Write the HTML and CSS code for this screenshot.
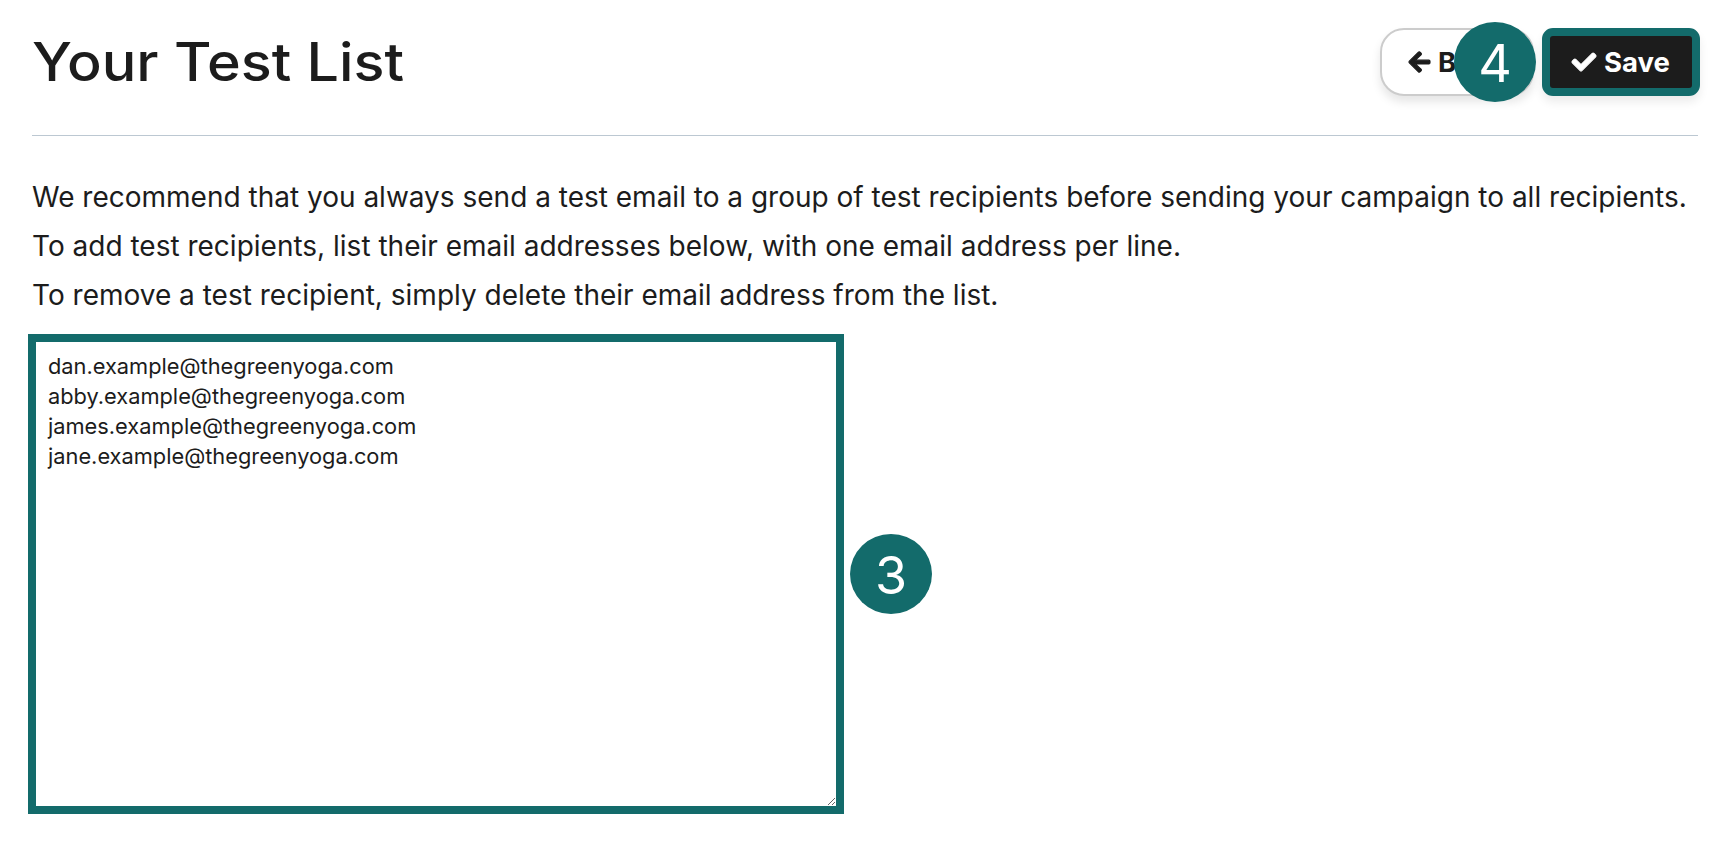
FILE: index.html
```html
<!DOCTYPE html>
<html lang="en">
<head>
  <meta charset="UTF-8" />
  <title>Your Test List</title>
  <link rel="stylesheet" href="styles.css">
</head>
<body>
  <div class="header">
    <h1>Your Test List</h1>
    <div class="actions">
      <button class="btn btn-back">
        <svg class="icon" viewBox="0 0 448 512"><path d="M257.5 445.1l-22.2 22.2c-9.4 9.4-24.6 9.4-33.9 0L7 273c-9.4-9.4-9.4-24.6 0-33.9L201.4 44.7c9.4-9.4 24.6-9.4 33.9 0l22.2 22.2c9.5 9.5 9.3 25-.4 34.3L136.6 216H424c13.3 0 24 10.7 24 24v32c0 13.3-10.7 24-24 24H136.6l120.5 114.8c9.8 9.3 10 24.8.4 34.3z"/></svg>
        <span class="btn-back-label">Back</span>
      </button>
      <span class="step step-over">4</span>
      <button class="btn btn-save">
        <svg class="icon" viewBox="0 0 512 512"><path d="M173.898 439.404l-166.4-166.4c-9.997-9.997-9.997-26.206 0-36.204l36.203-36.204c9.997-9.998 26.207-9.998 36.204 0L192 312.69 432.095 72.596c9.997-9.997 26.207-9.997 36.204 0l36.203 36.204c9.997 9.997 9.997 26.206 0 36.204l-294.4 294.401c-9.998 9.997-26.207 9.997-36.204-.001z"/></svg>
        Save
      </button>
    </div>
  </div>
  <hr />

  <div class="intro">
    <p>We recommend that you always send a test email to a group of test recipients before sending your campaign to all recipients.</p>
    <p>To add test recipients, list their email addresses below, with one email address per line.</p>
    <p>To remove a test recipient, simply delete their email address from the list.</p>
  </div>

  <div class="list-row">
    <textarea class="list-input" spellcheck="false">dan.example@thegreenyoga.com
abby.example@thegreenyoga.com
james.example@thegreenyoga.com
jane.example@thegreenyoga.com</textarea>
    <span class="step">3</span>
  </div>
</body>
</html>
```

FILE: styles.css
```css
html, body {
  height: 100%;
  overflow: hidden;
}
body {
  background: #fff;
  color: #1c1c1c;
  font-family: Inter, "Liberation Sans", sans-serif;
  margin: 0;
  padding: 28px 32px 0;
  box-sizing: border-box;
}
.header {
  display: flex;
  align-items: center;
  justify-content: space-between;
}
h1 {
  font-size: 53px;
  font-weight: 450;
  line-height: 68px;
  margin: 0;
  transform: scaleX(1.085);
  transform-origin: left center;
}
.actions {
  display: flex;
  gap: 8px;
  margin-right: -2px;
  position: relative;
}
.btn {
  align-items: center;
  box-sizing: border-box;
  cursor: pointer;
  display: flex;
  font-family: inherit;
  font-size: 27.5px;
  font-weight: 700;
  gap: 8px;
  height: 68px;
}
.icon {
  fill: currentColor;
  flex: none;
  height: 24px;
  overflow: visible;
  stroke: currentColor;
  stroke-width: 24;
}
.btn-back {
  background: #fff;
  border: 2px solid #ccc;
  border-radius: 24px;
  box-shadow: 0 6px 10px rgba(0, 0, 0, 0.1);
  color: #1c1c1c;
  padding: 0 27px;
  width: 154px;
}
.btn-save {
  background: #1c1c1c;
  border: 8px solid #136b6b;
  border-radius: 11px;
  box-shadow: 0 6px 10px rgba(0, 0, 0, 0.08);
  color: #fff;
  padding: 0 0 0 22px;
  width: 158px;
}
.step {
  align-items: center;
  background: #136b6b;
  border-radius: 50%;
  box-sizing: border-box;
  color: #fff;
  display: flex;
  flex: none;
  font-size: 52px;
  height: 80px;
  justify-content: center;
  padding-top: 2px;
  width: 82px;
}
.step-over {
  position: absolute;
  left: 74px;
  top: -6px;
}
hr {
  border: none;
  border-top: 1px solid #bcc8d2;
  margin: 39px 0 37px;
}
.intro p {
  font-size: 28px;
  line-height: 49px;
  margin: 0;
}
.list-row {
  align-items: center;
  display: flex;
  gap: 6px;
  margin: 14px 0 0 -4px;
}
.list-input {
  border: 8px solid #136b6b;
  box-sizing: border-box;
  color: #1c1c1c;
  display: block;
  font-family: inherit;
  font-size: 21.8px;
  height: 480px;
  line-height: 30px;
  outline: none;
  padding: 9px 12px;
  width: 816px;
}
```
